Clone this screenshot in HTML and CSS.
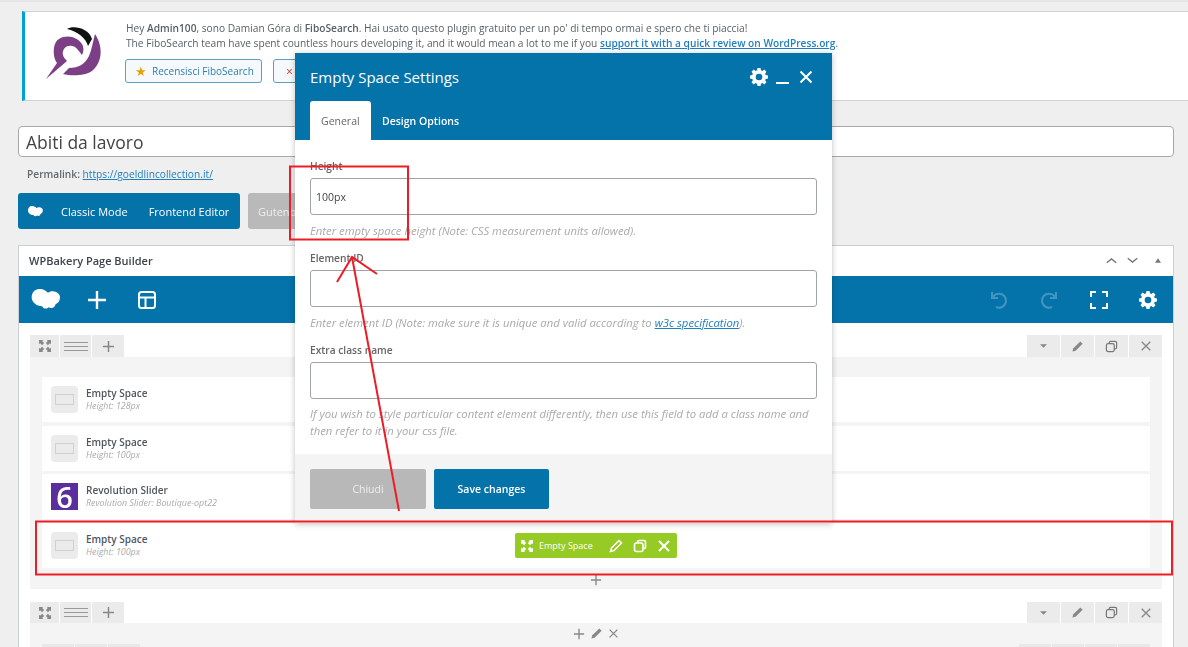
FILE: index.html
```html
<!DOCTYPE html>
<html lang="it">
<head>
<meta charset="utf-8">
<title>Abiti da lavoro</title>
<link rel="stylesheet" href="styles.css">
</head>
<body>
<div class="page">
  <section class="notice">
    <svg class="fibo" viewBox="0 0 60 54" width="60" height="54">
      <path d="M22 3 C28 -1 44 2 47 13 L43 20 C41 12 32 5 22 3Z" fill="#111"/>
      <path d="M1 53 L12 37 C7 30 8 16 14 13 C22 8 34 11 38 20 C39 24 38 27 37 29 L33 24 C30 19 22 18 19 23 C16 28 19 32 22 35Z" fill="#7c3f85"/>
      <path d="M50 8 C58 20 58 36 47 45 C40 50 26 50 18 48 L24 42 C34 42 40 38 44 30 C47 23 48 15 50 8Z" fill="#7c3f85"/>
    </svg>
    <div class="notice-body">
      <p>Hey <b>Admin100</b>, sono Damian Góra di <b>FiboSearch</b>. Hai usato questo plugin gratuito per un po' di tempo ormai e spero che ti piaccia!</p>
      <p>The FiboSearch team have spent countless hours developing it, and it would mean a lot to me if you <a href="#"><b>support it with a quick review on WordPress.org</b></a>.</p>
      <div class="notice-actions">
        <button class="wp-btn"><span class="star">★</span>Recensisci FiboSearch</button>
        <button class="wp-btn narrow"><span class="cross">×</span></button>
      </div>
    </div>
  </section>

  <input class="title-input" value="Abiti da lavoro" aria-label="Titolo">
  <div class="permalink"><b>Permalink:</b> <a href="#">https://goeldlincollection.it/</a></div>

  <div class="mode-row">
    <div class="mode-blue">
      <svg viewBox="0 0 30 22" width="15" height="11" class="wpb-small"><use href="#cloud"/></svg>
      <span class="mode-a">Classic Mode</span>
      <span class="mode-b">Frontend Editor</span>
    </div>
    <div class="mode-grey">Gutenberg</div>
  </div>

  <section class="builder">
    <header class="builder-head">
      <h2>WPBakery Page Builder</h2>
      <div class="head-tools">
        <svg viewBox="0 0 14 8" width="11" height="7"><path d="M1 7l6-5 6 5" class="ln-grey"/></svg>
        <svg viewBox="0 0 14 8" width="11" height="7"><path d="M1 1l6 5 6-5" class="ln-grey"/></svg>
        <svg viewBox="0 0 8 6" width="6" height="5" class="tri"><path d="M4 0l4 6H0z" fill="#72777c"/></svg>
      </div>
    </header>
    <div class="navbar">
      <svg viewBox="0 0 30 22" width="30" height="21"><defs><path id="cloud" fill="#fff" d="M8 0C13 0 15 2 17 4 C20 1 27 2 29 6 C31 11 28 15 25 16 C24 20 21 21 18 19 C16 21 12 21 11 18 C5 18 0 14 0 9 C0 4 3 0 8 0Z"/></defs><use href="#cloud"/></svg>
      <svg viewBox="0 0 20 20" width="20" height="20" class="nav-plus"><path d="M10 1v18M1 10h18" class="ln-white"/></svg>
      <svg viewBox="0 0 20 20" width="20" height="20" class="nav-layout"><rect x="2" y="2" width="16" height="16" rx="2.500" class="ln-thin"/><path d="M2 7.500h16M8.500 7.500V18" class="ln-thin"/></svg>
      <div class="nav-right">
        <svg viewBox="0 0 20 20" width="20" height="20" class="dim"><path d="M3 2v6h6M3.500 8A7 7 0 1 1 7 17" class="ln-thin"/></svg>
        <svg viewBox="0 0 20 20" width="20" height="20" class="dim"><path d="M17 2v6h-6M16.500 8A7 7 0 1 0 13 17" class="ln-thin"/></svg>
        <svg viewBox="0 0 20 20" width="20" height="20"><path d="M2 7V2h5M13 2h5v5M18 13v5h-5M7 18H2v-5" class="ln-thin"/></svg>
        <svg viewBox="0 0 20 20" width="18" height="18"><use href="#gear"/></svg>
      </div>
    </div>

    <div class="canvas">
      <div class="row-controls">
        <div class="left-ctl">
          <span class="ctl c-move"><svg viewBox="0 0 14 14" width="12" height="12"><use href="#move"/></svg></span>
          <span class="ctl c-lines"><i></i><i></i><i></i></span>
          <span class="ctl c-add"><svg viewBox="0 0 14 14" width="13" height="13"><path d="M7 1v12M1 7h12" class="ln-ctl"/></svg></span>
        </div>
        <div class="right-ctl">
          <span class="ctl"><svg viewBox="0 0 8 4" width="7" height="4"><path d="M0 0h8L4 4z" fill="#888"/></svg></span>
          <span class="ctl"><svg viewBox="0 0 14 14" width="13" height="13"><use href="#pencil" class="fill-ctl"/></svg></span>
          <span class="ctl"><svg viewBox="0 0 14 14" width="13" height="13"><use href="#copy" class="stroke-ctl"/></svg></span>
          <span class="ctl"><svg viewBox="0 0 14 14" width="12" height="12"><path d="M2 2l10 10M12 2L2 12" class="ln-ctl"/></svg></span>
        </div>
      </div>
      <div class="row-body first">
        <article class="element">
          <span class="el-icon"><i></i></span>
          <div class="el-text"><h3>Empty Space</h3><p>Height: 128px</p></div>
        </article>
        <article class="element">
          <span class="el-icon"><i></i></span>
          <div class="el-text"><h3>Empty Space</h3><p>Height: 100px</p></div>
        </article>
        <article class="element">
          <span class="el-icon rev">6</span>
          <div class="el-text"><h3>Revolution Slider</h3><p>Revolution Slider: Boutique-opt22</p></div>
        </article>
        <article class="element hovered">
          <span class="el-icon"><i></i></span>
          <div class="el-text"><h3>Empty Space</h3><p>Height: 100px</p></div>
          <div class="green-bar">
            <svg viewBox="0 0 14 14" width="12" height="12"><use href="#move" class="white-fill"/></svg>
            <span>Empty Space</span>
            <svg viewBox="0 0 14 14" width="14" height="14" class="gb-first"><use href="#pencil" class="white-line"/></svg>
            <svg viewBox="0 0 14 14" width="14" height="14"><use href="#copy" class="white-stroke"/></svg>
            <svg viewBox="0 0 14 14" width="14" height="14"><path d="M2 2l10 10M12 2L2 12" class="ln-gb"/></svg>
          </div>
        </article>
        <svg class="row-plus" viewBox="0 0 14 14" width="12" height="12"><path d="M7 1v12M1 7h12" class="ln-ctl"/></svg>
      </div>

      <div class="row-controls second">
        <div class="left-ctl">
          <span class="ctl c-move"><svg viewBox="0 0 14 14" width="12" height="12"><use href="#move"/></svg></span>
          <span class="ctl c-lines"><i></i><i></i><i></i></span>
          <span class="ctl c-add"><svg viewBox="0 0 14 14" width="13" height="13"><path d="M7 1v12M1 7h12" class="ln-ctl"/></svg></span>
        </div>
        <div class="right-ctl">
          <span class="ctl"><svg viewBox="0 0 8 4" width="7" height="4"><path d="M0 0h8L4 4z" fill="#888"/></svg></span>
          <span class="ctl"><svg viewBox="0 0 14 14" width="13" height="13"><use href="#pencil" class="fill-ctl"/></svg></span>
          <span class="ctl"><svg viewBox="0 0 14 14" width="13" height="13"><use href="#copy" class="stroke-ctl"/></svg></span>
          <span class="ctl"><svg viewBox="0 0 14 14" width="12" height="12"><path d="M2 2l10 10M12 2L2 12" class="ln-ctl"/></svg></span>
        </div>
      </div>
      <div class="row-body second-body">
        <div class="col-tools">
          <svg viewBox="0 0 14 14" width="12" height="12"><path d="M7 1v12M1 7h12" class="ln-ctl"/></svg>
          <svg viewBox="0 0 14 14" width="13" height="13"><use href="#pencil" class="fill-ctl"/></svg>
          <svg viewBox="0 0 14 14" width="11" height="11"><path d="M2 2l10 10M12 2L2 12" class="ln-ctl"/></svg>
        </div>
        <div class="stubs"><span></span><span></span><span></span></div>
        <div class="stubs stubs-right"><span></span><span></span><span></span><span></span></div>
      </div>
    </div>
  </section>
</div>

<aside class="modal">
  <header class="modal-head">
    <div class="modal-title">
      <h1>Empty Space Settings</h1>
      <div class="modal-tools">
        <svg viewBox="0 0 20 20" width="18" height="18"><use href="#gear"/></svg>
        <span class="minimize"></span>
        <svg viewBox="0 0 14 14" width="14" height="14"><path d="M1.500 1.500l11 11M12.500 1.500l-11 11" class="ln-close"/></svg>
      </div>
    </div>
    <nav class="tabs"><span class="tab active">General</span><span class="tab">Design Options</span></nav>
  </header>
  <div class="modal-body">
    <label>Height</label>
    <input class="field" value="100px" aria-label="Height">
    <p class="hint">Enter empty space height (Note: CSS measurement units allowed).</p>
    <label>Element ID</label>
    <input class="field" aria-label="Element ID">
    <p class="hint">Enter element ID (Note: make sure it is unique and valid according to <a href="#">w3c specification</a>).</p>
    <label>Extra class name</label>
    <input class="field" aria-label="Extra class name">
    <p class="hint last">If you wish to style particular content element differently, then use this field to add a class name and then refer to it in your css file.</p>
  </div>
  <footer class="modal-foot">
    <button class="mbtn close">Chiudi</button>
    <button class="mbtn save">Save changes</button>
  </footer>
</aside>

<svg class="annot" viewBox="0 0 1188 647" width="1188" height="647">
  <rect x="290" y="166.500" width="118" height="73" class="red"/>
  <rect x="36" y="521.500" width="1136" height="53" class="red"/>
  <path d="M399 511L352 257M337 282L352 257L377 274" class="red"/>
</svg>

<svg class="defs" width="0" height="0">
  <defs>
    <path id="gear" fill-rule="evenodd" fill="#fff" d="M8.300 0h3.400l.5 2.600 1.500.6 2.200-1.500 2.400 2.400-1.500 2.200.6 1.500 2.600.5v3.400l-2.600.5-.6 1.500 1.500 2.200-2.400 2.400-2.200-1.500-1.500.6-.5 2.600H8.300l-.5-2.600-1.500-.6-2.200 1.500-2.400-2.400 1.500-2.200-.6-1.500L0 11.700V8.300l2.600-.5.6-1.500-1.500-2.200 2.400-2.400 2.200 1.500 1.500-.6zM10 6.300a3.700 3.700 0 1 0 0 7.400 3.700 3.700 0 0 0 0-7.400z"/>
    <path id="move" d="M0 0h5L3.700 1.300 6 3.600 3.600 6 1.300 3.700 0 5zM14 0v5l-1.300-1.300L10.400 6 8 3.600l2.300-2.300L9 0zM0 14V9l1.300 1.300L3.600 8 6 10.400l-2.300 2.300L5 14zM14 14H9l1.300-1.300L8 10.400 10.400 8l2.300 2.300L14 9z"/>
    <path id="pencil" d="M10 1.500l2.500 2.500-7.500 7.500L1.500 12.500 2.500 9z"/>
    <g id="copy" fill="none"><rect x="1.500" y="4" width="8.500" height="8.500" rx="2"/><path d="M4.500 4V3a1.500 1.500 0 0 1 1.500-1.500h5A1.500 1.500 0 0 1 12.500 3v5a1.500 1.500 0 0 1-1.500 1.500h-1"/></g>
  </defs>
</svg>
</body>
</html>
```

FILE: styles.css
```css
* { box-sizing: border-box; }
html, body { margin: 0; height: 647px; overflow: hidden; }
body {
  background: #efefef;
  font-family: "Open Sans", "Noto Sans", sans-serif;
  color: #3c434a;
  position: relative;
  filter: blur(0.5px);
}
a { color: #1f7fc0; }
p { margin: 0; }
button { font-family: inherit; }
.defs { position: absolute; }

.page { padding: 9px 14px 0 18px; border-top: 2px solid #e6e6e6; }

.notice {
  margin: 0 -14px 0 4px;
  height: 90px;
  background: #fff;
  border-top: 1px solid #d0d2d4;
  border-bottom: 1px solid #d0d2d4;
  border-left: 3px solid #00a0d2;
  display: flex;
  padding: 9px 0 0 20px;
}
.fibo { flex: none; margin: 5px 0 0 0; }
.notice-body { margin-left: 21px; font-size: 10.180px; line-height: 15px; color: #5a6066; }
.notice-body b { font-weight: 600; }
.notice-body a b { color: #1f7fc0; }
.notice-actions { display: flex; gap: 11px; margin: 8px 0 0 -1px; }
.wp-btn {
  height: 24px;
  padding: 0 8px 0 9px;
  width: 137px;
  background: #f6f9fb;
  border: 1px solid #5d9ec2;
  border-radius: 3px;
  color: #2b7fb0;
  font-size: 10px;
  display: flex;
  align-items: center;
  white-space: nowrap;
}
.wp-btn.narrow { width: 60px; padding-left: 12px; }
.star { color: #e6a000; font-size: 13px; margin: 0 5px 0 0; line-height: 1; }
.cross { color: #d63638; font-size: 12px; }

.title-input {
  display: block;
  width: 100%;
  height: 31px;
  margin-top: 25px;
  padding: 0 7px;
  border: 1px solid #a8a8a8;
  border-radius: 4px;
  background: #fff;
  font: 17.500px "Open Sans", sans-serif;
  color: #444;
}
.permalink { margin: 9px 0 0 9px; font-size: 10.200px; line-height: 16px; color: #646970; height: 16px; }
.permalink b { font-weight: 600; }

.mode-row { display: flex; gap: 8px; margin-top: 11px; height: 36px; }
.mode-blue {
  width: 222px;
  background: #0473aa;
  border-radius: 3px;
  color: #fff;
  font-size: 11px;
  display: flex;
  align-items: center;
  padding-left: 10px;
}
.wpb-small { margin-right: 18px; }
.mode-a { margin-right: 21px; }
.mode-grey {
  width: 100px;
  background: #b9b9b9;
  border-radius: 3px;
  color: #eee;
  font-size: 11px;
  display: flex;
  align-items: center;
  padding-left: 10px;
}

.builder {
  margin-top: 16px;
  height: 420px;
  background: #fff;
  border: 1px solid #ccd0d4;
  border-bottom: 0;
  overflow: hidden;
}
.builder-head {
  height: 30px;
  display: flex;
  align-items: center;
  justify-content: space-between;
  padding: 0 12px 2px 10px;
}
.builder-head h2 { margin: 0; font-size: 11px; font-weight: 600; color: #3c434a; }
.head-tools { display: flex; align-items: center; gap: 10px; }
.tri { margin-left: 7px; }
.ln-grey { fill: none; stroke: #72777c; stroke-width: 1.700; }

.navbar {
  height: 47px;
  background: #0473aa;
  display: flex;
  align-items: center;
  padding-left: 12px;
}
.nav-plus { margin-left: 26px; }
.nav-layout { margin-left: 30px; }
.nav-right { margin-left: auto; display: flex; gap: 30px; align-items: center; padding-right: 16px; }
.dim { opacity: 0.25; }
.ln-white { fill: none; stroke: #fff; stroke-width: 2.400; }
.ln-thin { fill: none; stroke: #fff; stroke-width: 2; }

.canvas { padding: 12px 11px 0; }
.row-controls { display: flex; justify-content: space-between; height: 22px; }
.row-controls.second { height: 21px; margin-top: 13px; }
.left-ctl, .right-ctl { display: flex; gap: 1px; }
.ctl {
  background: #ebebeb;
  height: 100%;
  width: 33px;
  display: flex;
  align-items: center;
  justify-content: center;
}
.c-move { width: 29px; }
.c-lines { width: 31px; flex-direction: column; gap: 3px; }
.c-lines i { display: block; width: 24px; height: 1px; background: #999; }
.left-ctl .c-add { width: 32px; }
.ln-ctl { fill: none; stroke: #888; stroke-width: 1.600; }
.fill-ctl { fill: #888; }
.stroke-ctl { stroke: #777; stroke-width: 1.300; }
.c-move svg { fill: #888; }

.row-body { background: #f4f4f4; position: relative; }
.row-body.first { height: 232px; padding: 20px 12px 0; }
.element {
  height: 45px;
  background: #fff;
  display: flex;
  align-items: center;
  gap: 8px;
  padding-left: 9px;
  margin-bottom: 3.500px;
  position: relative;
}
.element h3 { margin: 0; font-size: 10px; line-height: 13px; font-weight: 600; color: #50575e; }
.element p { font-size: 8.900px; line-height: 12px; font-style: italic; color: #aaa; }
.el-icon {
  width: 27px;
  height: 27px;
  border-radius: 4px;
  background: #ebebeb;
  display: flex;
  align-items: center;
  justify-content: center;
  flex: none;
}
.el-icon i { display: block; width: 19px; height: 11px; border: 1px solid #d0d0d0; }
.el-icon.rev {
  background: #5b2e9e;
  border-radius: 0;
  color: #fff;
  font: 600 29px/1 "Open Sans", sans-serif;
}
.green-bar {
  position: absolute;
  left: 473px;
  top: 10.500px;
  width: 162px;
  height: 25px;
  background: #96cb25;
  border-radius: 2px;
  display: flex;
  align-items: center;
  padding-left: 6px;
  color: #fff;
  font-size: 9px;
}
.green-bar span { margin-left: 6px; }
.green-bar svg + svg { margin-left: 10px; }
.green-bar .gb-first { margin-left: 16px; }
.white-fill { fill: #fff; }
.white-line { fill: none; stroke: #fff; stroke-width: 1.500; }
.white-stroke { stroke: #fff; stroke-width: 1.600; }
.ln-gb { fill: none; stroke: #fff; stroke-width: 2; }
.row-plus { position: absolute; left: 560px; top: 217px; }

.second-body {
  height: 40px;
  background: #f4f4f4;
}
.col-tools {
  height: 21px;
  display: flex;
  align-items: center;
  justify-content: center;
  gap: 5px;
}
.stubs { display: flex; gap: 1px; position: absolute; left: 12px; top: 21px; }
.stubs span { display: block; width: 32px; height: 6px; background: #e8e8e8; }
.stubs-right { left: auto; right: 12px; }

.modal {
  position: absolute;
  left: 295px;
  top: 53px;
  width: 537px;
  height: 470px;
  background: #fff;
  box-shadow: 0 1px 6px rgba(0,0,0,.25);
  display: flex;
  flex-direction: column;
}
.modal-head { height: 87px; background: #0473aa; padding: 0 15px; display: flex; flex-direction: column; justify-content: space-between; }
.modal-title { display: flex; align-items: center; justify-content: space-between; padding-top: 14px; }
.modal-title h1 { margin: 0; font-size: 15px; line-height: 20px; font-weight: 400; color: #fff; }
.modal-tools { display: flex; align-items: center; gap: 8px; padding-right: 4px; }
.minimize { display: block; width: 13px; height: 2px; background: #fff; margin-top: 12px; }
.modal-tools svg:last-child { margin-left: 2px; }
.ln-close { fill: none; stroke: #fff; stroke-width: 2; }
.tabs { display: flex; height: 39px; }
.tab { padding: 0 11px; color: #fff; font-size: 10.500px; font-weight: 600; line-height: 41px; }
.tab.active { background: #fff; color: #666; border-radius: 3px 3px 0 0; font-weight: 400; width: 61px; }
.modal-body { flex: 1; padding: 19px 15px 0; }
.modal-body label { display: block; font-size: 10.200px; line-height: 14px; font-weight: 600; color: #666; margin-bottom: 5px; }
.field {
  display: block;
  width: 100%;
  height: 37px;
  border: 1px solid #a0a3a8;
  border-radius: 3px;
  background: #fff;
  padding: 1px 5px 0;
  font: 10.500px "Open Sans", sans-serif;
  color: #444;
}
.hint { font-size: 11.300px; line-height: 16px; font-style: italic; color: #aaa; margin: 8px 0 12px; height: 16px; }
.hint.last { height: auto; margin: 6px 0 0; line-height: 17px; }
.hint a { color: #1f7fc0; }
.modal-foot { height: 69px; background: #f4f4f4; padding: 15px 15px 0; display: flex; gap: 8px; align-items: flex-start; }
.mbtn { height: 40px; border: 0; border-radius: 2px; color: #fff; font-size: 10.500px; }
.close { width: 116px; background: #b8b8b8; color: #eee; }
.save { width: 115px; background: #0473aa; font-weight: 600; }

.annot { position: absolute; left: 0; top: 0; pointer-events: none; }
.red { fill: none; stroke: #ee1c25; stroke-width: 2; }
```
